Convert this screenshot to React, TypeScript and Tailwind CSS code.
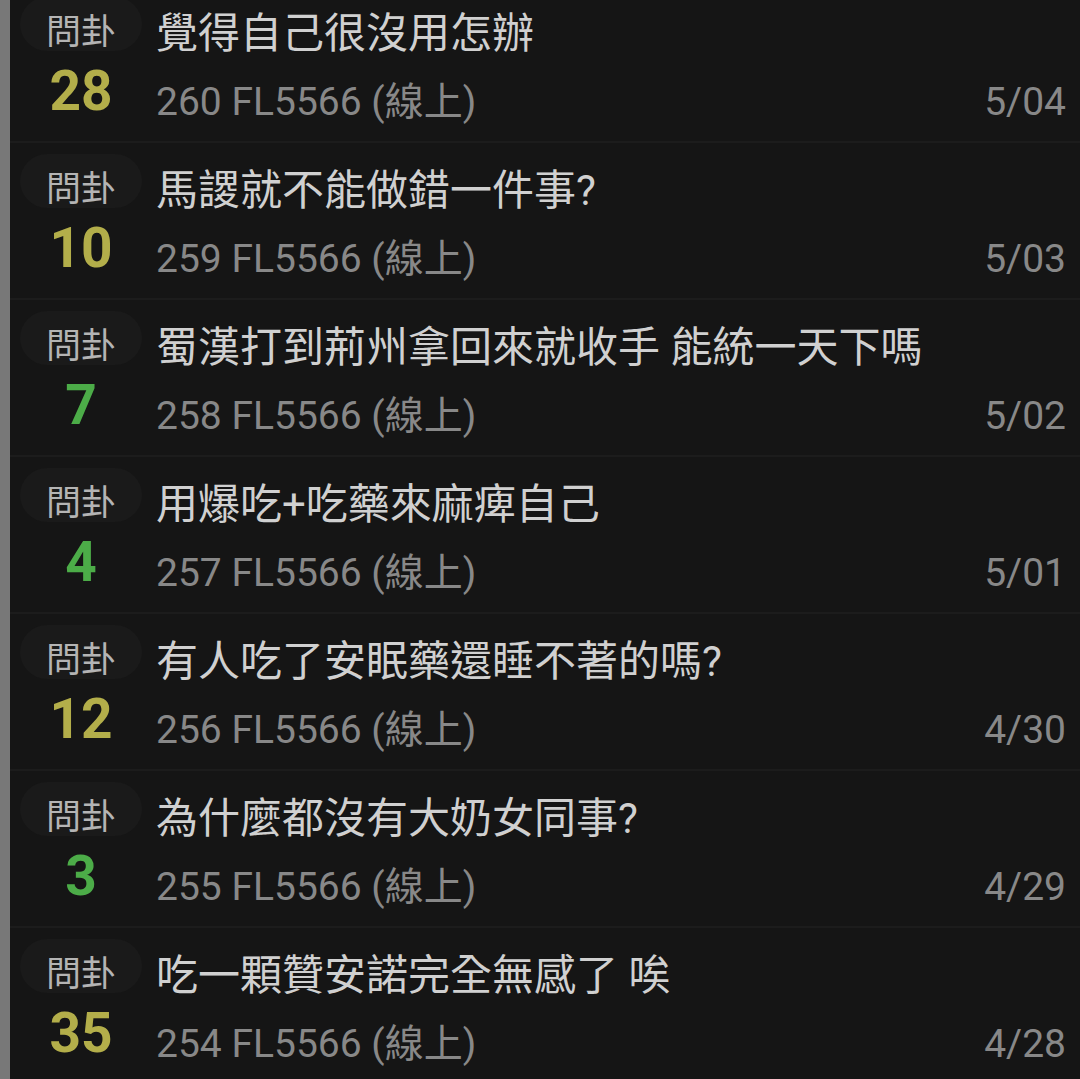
import React from "react";

type Post = {
  title: string;
  push: number;
  no: number;
  date: string;
};

const posts: Post[] = [
  { title: "覺得自己很沒用怎辦", push: 28, no: 260, date: "5/04" },
  { title: "馬謖就不能做錯一件事?", push: 10, no: 259, date: "5/03" },
  { title: "蜀漢打到荊州拿回來就收手 能統一天下嗎", push: 7, no: 258, date: "5/02" },
  { title: "用爆吃+吃藥來麻痺自己", push: 4, no: 257, date: "5/01" },
  { title: "有人吃了安眠藥還睡不著的嗎?", push: 12, no: 256, date: "4/30" },
  { title: "為什麼都沒有大奶女同事?", push: 3, no: 255, date: "4/29" },
  { title: "吃一顆贊安諾完全無感了 唉", push: 35, no: 254, date: "4/28" },
];

const font = { fontFamily: "Roboto, 'Noto Sans CJK TC', sans-serif" };

function PostRow({ post }: { post: Post }) {
  // 10 and up shows in yellow, below in green
  const pushColor = post.push >= 10 ? "text-[#b3ae4a]" : "text-[#4cac48]";

  return (
    <div className="flex h-[157px] border-b-2 border-[#1c1c1c]">
      <div className="flex w-[132px] shrink-0 flex-col items-center pl-[10px] pt-[11px]">
        <div className="flex h-[54px] w-[122px] items-center justify-center rounded-full bg-[#1a1a1a] pt-[16px] text-[35px] leading-none text-[#b4b4b4]">
          問卦
        </div>
        <div className={`mt-[12px] text-[55px] font-bold leading-[56px] ${pushColor}`}>
          {post.push}
        </div>
      </div>
      <div className="flex min-w-0 flex-1 flex-col pl-[14px] pr-[14px] pt-[24px]">
        <div className="h-[48px] truncate text-[42px] leading-[48px] text-[#d0d0d0]">
          {post.title}
        </div>
        <div className="mt-[20px] flex h-[48px] items-center justify-between text-[39px] leading-[48px] text-[#888888]">
          <span>{post.no} FL5566 (線上)</span>
          <span>{post.date}</span>
        </div>
      </div>
    </div>
  );
}

export default function App() {
  return (
    <div className="flex h-[1079px] w-[1080px] overflow-hidden bg-[#151515]" style={font}>
      <div className="w-[10px] shrink-0 bg-[#787878]" />
      <div className="-mt-[14px] flex-1">
        {posts.map((p) => (
          <PostRow key={p.no} post={p} />
        ))}
      </div>
    </div>
  );
}
